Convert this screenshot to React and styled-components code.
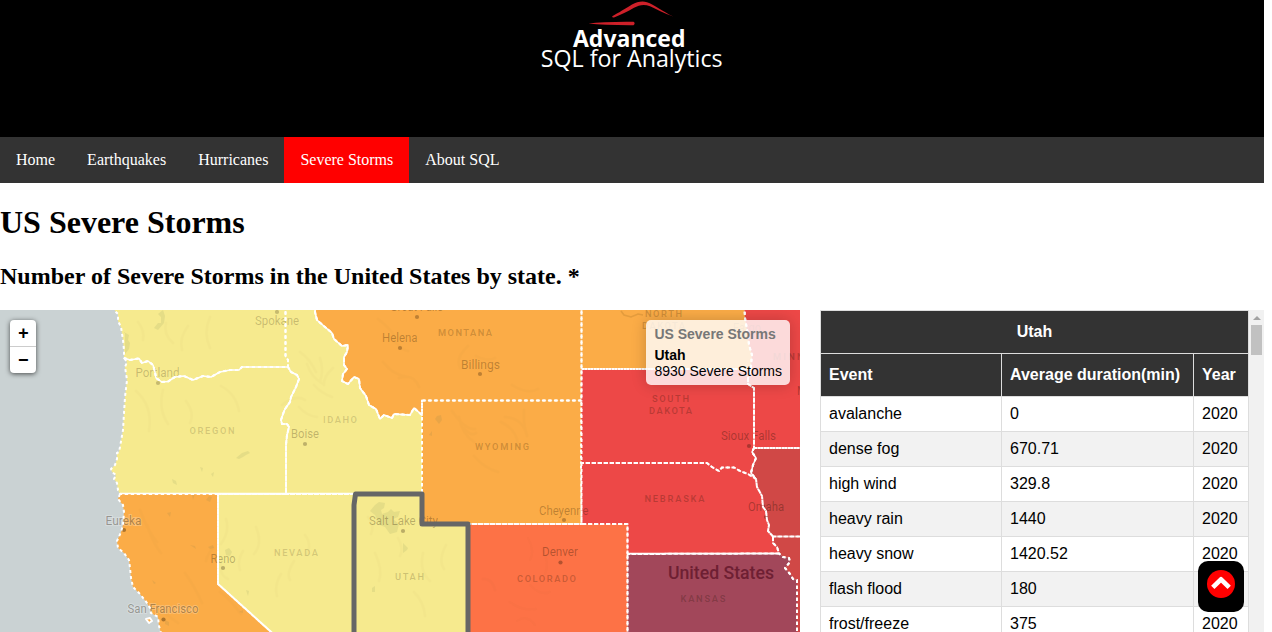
import React from "react";
import styled, { createGlobalStyle } from "styled-components";

const GlobalStyle = createGlobalStyle`
  body {
    margin: 0;
    background: #fff;
    font-family: "Liberation Serif", serif;
    overflow: hidden;
  }
`;

const Page = styled.div`
  width: 1264px;
  height: 632px;
  overflow: hidden;
`;

const Header = styled.header`
  display: flex;
  justify-content: center;
  height: 137px;
  background: #000;
`;

const Nav = styled.nav`
  display: flex;
  height: 46px;
  background: #333;
`;

const NavLink = styled.a`
  padding: 14px 16px;
  font-size: 16px;
  line-height: 18px;
  color: #fff;
  background: ${(p) => (p.$active ? "#f00" : "transparent")};
`;

const Title = styled.h1`
  margin: 21px 0 22px;
  font-size: 32px;
  line-height: 37px;
`;

const Subtitle = styled.h2`
  margin: 0 0 20px;
  font-size: 24px;
  line-height: 27px;
`;

const Content = styled.main`
  display: flex;
  gap: 20px;
  height: 322px;
`;

const MapPane = styled.div`
  position: relative;
  width: 800px;
  height: 322px;
  overflow: hidden;
  background: #cad2d3;
  font-family: "Liberation Sans", sans-serif;
  svg {
    display: block;
  }
`;

const ZoomControl = styled.div`
  position: absolute;
  left: 10px;
  top: 10px;
  width: 26px;
  border-radius: 4px;
  background: #fff;
  box-shadow: 0 1px 5px rgba(0, 0, 0, 0.65);
`;

const ZoomButton = styled.div`
  height: 26px;
  font: bold 18px/28px "Liberation Mono", monospace;
  text-align: center;
  text-indent: 1px;
  color: #000;
  & + & {
    border-top: 1px solid #ccc;
  }
`;

const Info = styled.div`
  position: absolute;
  top: 10px;
  right: 10px;
  padding: 6px 8px;
  font-size: 14px;
  line-height: 16px;
  white-space: nowrap;
  border-radius: 5px;
  background: rgba(255, 255, 255, 0.8);
  box-shadow: 0 0 15px rgba(0, 0, 0, 0.2);
`;

const InfoTitle = styled.h4`
  margin: 0 0 5px;
  color: #777;
`;

const TablePane = styled.div`
  display: flex;
  width: 444px;
  height: 322px;
  overflow: hidden;
`;

const Table = styled.table`
  width: 429px;
  height: max-content;
  table-layout: fixed;
  border-collapse: collapse;
  font: 16px/18px "Liberation Sans", sans-serif;
`;

const HeadCell = styled.th`
  padding: 12px 8px;
  border: 1px solid #ddd;
  text-align: ${(p) => p.$align || "left"};
  color: #fff;
  background: #333;
`;

const Row = styled.tr`
  &:nth-child(even) {
    background: #f2f2f2;
  }
`;

const Cell = styled.td`
  padding: 8px;
  border: 1px solid #ddd;
`;

const ScrollTrack = styled.div`
  display: flex;
  flex-direction: column;
  align-items: center;
  width: 15px;
  background: #f1f1f1;
`;

const ScrollArrow = styled.div`
  margin: 6px 0 5px;
  border: 4px solid transparent;
  border-top: 0;
  border-bottom-color: #a3a3a3;
`;

const ScrollThumb = styled.div`
  width: 11px;
  height: 30px;
  background: #c1c1c1;
`;

const TopButton = styled.button`
  position: fixed;
  left: 1198px;
  top: 561px;
  width: 46px;
  height: 51px;
  padding: 9px 9px 14px;
  border: 0;
  border-radius: 10px;
  background: #000;
  svg {
    display: block;
  }
`;

const MapText = styled.text`
  font-family: Roboto, sans-serif;
  font-size: ${(p) => p.$size}px;
  font-weight: ${(p) => p.$weight};
  fill: ${(p) => p.$fill || "#201000"};
  fill-opacity: ${(p) => p.$opacity || 1};
`;

const LogoText = styled.text`
  font-family: "Open Sans", sans-serif;
  font-size: ${(p) => p.$size}px;
  font-weight: ${(p) => p.$weight};
  fill: #fff;
`;

const YELLOW = "#f6ea8e";
const ORANGE = "#fbac47";
const CORAL = "#fd7246";
const RED = "#ed4847";
const BRICK = "#d04846";
const PLUM = "#a2475a";

// Shared borders, listed in one direction and reversed where the neighbour needs it.
const waCoast = [[114, 300], [115, 311], [118, 314], [118, 321], [121, 327], [123, 340], [124, 350], [124, 358]];
const orCoast = [[124, 358], [127, 362], [125, 367], [127, 380], [125, 397], [124, 413], [123, 430], [120, 447], [119, 452], [117, 453], [117, 459], [115, 465], [111, 469], [112, 472], [116, 475], [114, 479], [117, 483], [118, 490], [120, 494]];
const caCoast = [[120, 494], [118, 499], [123, 505], [124, 512], [123, 525], [121, 532], [117, 541], [118, 548], [124, 553], [129, 560], [130, 568], [131, 578], [133, 587], [140, 594], [147, 603], [150, 608], [151, 613], [158, 617], [159, 626], [163, 640]];
const columbia = [[124, 358], [130, 360], [139, 358.5], [142, 363], [148, 361], [153, 365], [155, 372], [156, 378], [162, 382], [168, 381.5], [175, 377], [184, 376], [193, 380], [203, 376], [211, 377], [220, 372], [230, 370], [239, 370], [242, 367], [288, 367]];
const waId = [[285.5, 300], [285.5, 356], [288, 360], [288, 367]];
const orId = [[288, 367], [291, 372], [297, 375], [299, 379], [296, 387], [291, 397], [290, 402], [285, 409], [283, 414], [281, 420], [282, 424], [287, 424], [289, 427], [287, 435], [286, 445], [286, 494]];
const idMt = [[316, 300], [315, 312], [317, 320], [325, 327], [332, 333], [334, 339], [342, 346], [348, 345], [347, 352], [344, 357], [344, 365], [347, 369], [343, 374], [342, 381], [348, 384], [354, 377], [359, 379], [360, 388], [366, 396], [369, 405], [376, 409], [380, 419], [384, 415], [392, 418], [394, 414], [410, 415], [414, 408], [422, 415]];
const redRiver = [[744, 300], [745, 318], [748, 335], [749, 345], [752, 355], [751, 365], [751, 369]];
const sdMn = [[751, 369], [748, 378], [748, 384], [754, 388], [754, 395], [754, 448]];
const sdIa = [[754, 448], [752, 452], [756, 458], [753, 465], [751, 473], [756, 479]];
const sdNe = [[581, 463], [707, 463], [712, 467], [719, 471], [722, 467.5], [734, 467.5], [740, 471], [748, 474], [756, 479]];
const missouri = [[756, 479], [757, 487], [762, 496], [763, 507], [766, 511], [767, 520], [769, 525], [768, 531], [773, 536.5]];
const neMo = [[773, 536.5], [773, 543], [777, 547], [779, 553.5]];
const ksMo = [[779, 553.5], [783, 557], [789, 558], [790, 562], [785, 568], [790, 574], [793, 579], [797, 580], [797, 640]];
const rev = (a) => [...a].reverse();

const states = [
  { id: "WA", fill: YELLOW, pts: [...waCoast, ...columbia, ...rev(waId)] },
  { id: "OR", fill: YELLOW, pts: [...columbia, ...orId, ...rev(orCoast)] },
  { id: "CA", fill: ORANGE, pts: [...caCoast, [280, 640], [218, 584], [218, 494]] },
  { id: "NV", fill: YELLOW, pts: [[218, 494], [355, 494], [354, 640], [280, 640], [218, 584]] },
  { id: "ID", fill: YELLOW, pts: [...waId, ...orId, [422, 494], ...rev(idMt)] },
  { id: "MT", fill: ORANGE, pts: [...idMt, [422, 400.5], [581.5, 400.5], [581.5, 300]] },
  { id: "WY", fill: ORANGE, pts: [[422, 400.5], [581.5, 400.5], [581.5, 524], [422, 524]] },
  { id: "ND", fill: ORANGE, pts: [[581.5, 300], ...redRiver, [581.5, 369]] },
  { id: "MN", fill: RED, pts: [...redRiver, ...sdMn, [810, 448], [810, 300]] },
  { id: "SD", fill: RED, pts: [[581.5, 369], ...sdMn, ...sdIa, ...rev(sdNe)] },
  { id: "NE", fill: RED, pts: [...sdNe, ...missouri, ...neMo, [627.5, 554], [627.5, 524], [581.5, 524]] },
  { id: "IA", fill: BRICK, pts: [...sdIa, ...missouri, [810, 536.5], [810, 448]] },
  { id: "MO", fill: BRICK, pts: [...neMo, ...ksMo, [810, 640], [810, 536.5]] },
  { id: "KS", fill: PLUM, pts: [[627.5, 554], ...ksMo, [627.5, 640]] },
  { id: "CO", fill: CORAL, pts: [[468, 524], [627.5, 524], [627.5, 640], [468, 640]] },
];

// Borders where the dashes of both neighbours interleave into a full line.
const fullBorders = [
  columbia,
  orId,
  idMt,
  sdIa,
  [[120, 493.5], [355, 493.5]],
  [[218, 494], [218, 584], [280, 640]],
  [[627.5, 553.5], [779, 553.5]],
];

const utah = "355.5,494 422,494 422,524 468,524 468,640 354,640 354,505";
const toPoints = (pts) => pts.map((p) => p.join(",")).join(" ");

// text, left x, baseline, width, ink opacity, dot x, dot y
const cities = [
  ["Spokane", 255, 325, 44, 0.22, 277, 312],
  ["Portland", 135.5, 377, 44, 0.22, 158, 383],
  ["Boise", 291, 438, 28, 0.26, 305, 444],
  ["Helena", 382, 342, 35.5, 0.28, 400, 348],
  ["Great Falls", 390, 311, 53, 0.28, 417, 317],
  ["Billings", 461, 368.5, 39, 0.28, 480, 374],
  ["Eureka", 105.5, 524.5, 36, 0.36, 124, 530],
  ["Reno", 210.5, 562.5, 25, 0.28, 223, 568],
  ["San Francisco", 127.5, 613, 71, 0.36, 163.5, 619.5],
  ["Salt Lake City", 369, 525, 69, 0.28, 403, 531],
  ["Cheyenne", 539, 514.5, 49.5, 0.28, 564, 520],
  ["Denver", 542, 556, 36, 0.32, 560.5, 562.5],
  ["Sioux Falls", 721, 440, 55, 0.32, 749, 446],
  ["Omaha", 748, 510.5, 36, 0.32, 766, 517],
  ["Fargo", 733, 332, 28, 0.2, 747, 338],
  ["Minneapolis", 797, 395, 60, 0.32, 828, 401],
];

const regions = [
  ["OREGON", 189.5, 434, 45, 0.17],
  ["IDAHO", 323, 423, 34, 0.17],
  ["NEVADA", 274, 556, 44, 0.17],
  ["UTAH", 395, 580, 29, 0.19],
  ["MONTANA", 438, 335.5, 54, 0.21],
  ["WYOMING", 475, 450, 54, 0.21],
  ["NORTH", 645, 317, 37, 0.2],
  ["DAKOTA", 642, 329, 43, 0.2],
  ["SOUTH", 652, 402, 37, 0.25],
  ["DAKOTA", 649, 413.5, 43, 0.25],
  ["MINNESOTA", 773, 360, 70, 0.25],
  ["NEBRASKA", 644.5, 502, 60, 0.25],
  ["COLORADO", 517, 582, 59, 0.24],
  ["KANSAS", 680.5, 601.5, 45, 0.24],
];

// Faint lakes and mountain shading of the base map.
const relief = [
  "M163 310l2 6-1 7-6 7-4-2 4-5 3 0 0-6-3-3z",
  "M124 332l5 3-1 5 2 3-1 6-4 5 0-22z",
  "M236 458l6-5 6-2 2 2-4 2-3 2-4 2z",
  "M441 415l-4 1-2 3 4 5 3-4z",
  "M172 479l4 2 1 4-4-2z M200 467l3 1-1 4z M211 474l3-2-1 5z",
  "M225 550l4-2 3 4-2 4-4-1z M246 590l3 1-1 5z",
  "M192 495l3-1-2 6z M206 500l3-4 3 1-2 5z M167 513l4-1-1 5z",
  "M190 545l5 1 1 3z M208 547l5-2 1 3-4 1z M152 580l4 3-2 1z M239 612l4-2 0 3z",
  "M429 435l3-4 0 5z M165 620l4 2 0 4-4-2z",
];

const shading = [
  "M300 352q10 7 16 20m-9-8q4 13 16 20m-3-26q4 12 0 24m13-14q-10 9-9 17m-10 0q7 8 18 12m-50 8q14-11 23-5m-6 7q8 9 18 10",
  "M226 519q4 12-5 25m22 7q-6 10-3 19m16-43q7 17-2 27m27 20q-7 11-4 22m17-35q-8 13-4 19m15-45q7 9 2 20m-86 9q-2 11 7 15",
  "M391 337q12 14 17 14m-25 11q10 13 24 15m-29-58q18 14 16 20m74 7q-13 12-8 22m16-12q12 6 19 2m-96 20q15-5 20 9m93-2q16 10 26 4",
  "M452 411q13 19 23 18m-16-12q3 17 15 25m31-25q17 1 22 18m-26-13q15 7 17 22m6-34q-1 14 3 26m-53 20q10 12 24 16m-34-44q7 9 12 5",
  "M138 322q7 9 5 18m23-17q-3 11 7 20m15-17q-9 12-6 24m28-33q-7 16 0 31m-74 43q17 15 13 40m14-41q-5 19 5 34m18-23q9 12 4 22m31-37q15 8 18 25",
  "M140 510q8 22 17 32m-10-17q7 20 14 28m24 20q10 14 17 30m-48-1q12 13 24 21m42-31q9 6 21 22m-28-66q-6 7-7 13",
  "M528 538q7 13 2 22m12-11q8 14 3 25m-15 11q10 11 20 7m-40 10q11 9 26 7m-19 12q10-7 18 4m-52-46q9-1 12 11",
  "M375 553q8 17 4 28m44-28q-4 18 7 28m-16 11q10 10 11 24m21-71q-8 15-2 24m-76-52q7 9 3 17m27 4q6 11 2 18",
];

function UsMap() {
  return (
    <svg width="800" height="322" viewBox="0 310 800 322">
      {states.map((s) => (
        <polygon key={s.id} points={toPoints(s.pts)} fill={s.fill} />
      ))}
      <polygon points={utah} fill={YELLOW} />
      <g fill="#56704a" opacity="0.1">
        {relief.map((d) => (
          <path key={d} d={d} />
        ))}
        <path d="M375 505l4-3 6 1-1 5-3 2 1 4 6-2 3-3 3 3 6-1-2 6-5 2 6 5-2 8-7 2-5-7-5-2-5-10-5-4z M403 543l5 5-1 2-4 3z M372 588l3-2 0 6-3 0z" />
      </g>
      <path d="M621 311l3 4 7 2 7-3 5 1" fill="none" stroke="#a06a20" strokeWidth="1.6" opacity="0.25" />
      <g fill="none" stroke="#775d37" strokeWidth="2.5" strokeLinecap="round" opacity="0.02">
        {shading.map((d) => (
          <path key={d} d={d} />
        ))}
      </g>
      {regions.map(([name, x, y, w, ink]) => (
        <MapText key={name + x} x={x} y={y} textLength={w} $size={9.3} $weight={600} $opacity={ink}>
          {name}
        </MapText>
      ))}
      {cities.map(([name, x, y, w, ink, cx, cy]) => (
        <g key={name}>
          <MapText
            x={x}
            y={y}
            textLength={w}
            lengthAdjust="spacingAndGlyphs"
            $size={12}
            $weight={400}
            $opacity={ink}
            stroke={name === "Eureka" || name === "San Francisco" ? "#fff" : "none"}
            strokeWidth="2"
            strokeOpacity="0.22"
            paintOrder="stroke"
          >
            {name}
          </MapText>
          <circle cx={cx} cy={cy} r="2.1" fill="#201000" fillOpacity={ink} />
        </g>
      ))}
      <MapText x="668" y="579" textLength="106" lengthAdjust="spacingAndGlyphs" $size={18.5} $weight={500} $fill="#6e1f33">
        United States
      </MapText>
      <g fill="none" stroke="#fff" strokeLinejoin="round">
        {states.map((s) => (
          <polygon key={s.id} points={toPoints(s.pts)} strokeWidth="2" strokeDasharray="3" />
        ))}
        {fullBorders.map((b, i) => (
          <polyline key={i} points={toPoints(b)} strokeWidth="1.5" />
        ))}
        <path d="M146 619l4-1 2 3-3 2z" strokeWidth="2" fill={ORANGE} />
      </g>
      <polygon points={utah} fill="none" stroke="#666" strokeWidth="5" strokeLinejoin="round" />
    </svg>
  );
}

function Logo() {
  return (
    <svg width="184" height="76" viewBox="540 0 184 76">
      <path
        d="M612.2 16.2C618 13.4 626 8.2 632 4.6C637 1.9 642 0.8 647 2.2C654 4.6 663 11.5 673.3 16.6C664 13.4 656 9 650 6.2C644 3.8 639 5 634 7.8C627 11.8 620 15.2 614 17.4Q612 17.6 612.2 16.2Z"
        fill="#cd2029"
      />
      <path d="M588.5 23.5Q604 21.5 633.5 21.8Q635.8 23.5 633.5 25.2Q604 25.3 588.5 23.5Z" fill="#cd2029" />
      <LogoText x="573" y="46.6" textLength="112.5" lengthAdjust="spacingAndGlyphs" $size={22.8} $weight={700}>
        Advanced
      </LogoText>
      <LogoText x="540.7" y="66.5" textLength="182" lengthAdjust="spacingAndGlyphs" $size={22.8} $weight={400}>
        SQL for Analytics
      </LogoText>
    </svg>
  );
}

const links = ["Home", "Earthquakes", "Hurricanes", "Severe Storms", "About SQL"];

const rows = [
  ["avalanche", "0"],
  ["dense fog", "670.71"],
  ["high wind", "329.8"],
  ["heavy rain", "1440"],
  ["heavy snow", "1420.52"],
  ["flash flood", "180"],
  ["frost/freeze", "375"],
];

export default function App() {
  return (
    <Page>
      <GlobalStyle />
      <Header>
        <Logo />
      </Header>
      <Nav>
        {links.map((l) => (
          <NavLink key={l} $active={l === "Severe Storms"}>
            {l}
          </NavLink>
        ))}
      </Nav>
      <Title>US Severe Storms</Title>
      <Subtitle>Number of Severe Storms in the United States by state. *</Subtitle>
      <Content>
        <MapPane>
          <UsMap />
          <ZoomControl>
            <ZoomButton>+</ZoomButton>
            <ZoomButton>−</ZoomButton>
          </ZoomControl>
          <Info>
            <InfoTitle>US Severe Storms</InfoTitle>
            <b>Utah</b>
            <br />
            8930 Severe Storms
          </Info>
        </MapPane>
        <TablePane>
          <Table>
            <colgroup>
              <col width="181" />
              <col width="192" />
              <col width="55" />
            </colgroup>
            <thead>
              <tr>
                <HeadCell colSpan={3} $align="center">Utah</HeadCell>
              </tr>
              <tr>
                <HeadCell>Event</HeadCell>
                <HeadCell>Average duration(min)</HeadCell>
                <HeadCell>Year</HeadCell>
              </tr>
            </thead>
            <tbody>
              {rows.map(([event, duration]) => (
                <Row key={event}>
                  <Cell>{event}</Cell>
                  <Cell>{duration}</Cell>
                  <Cell>2020</Cell>
                </Row>
              ))}
            </tbody>
          </Table>
          <ScrollTrack>
            <ScrollArrow />
            <ScrollThumb />
          </ScrollTrack>
        </TablePane>
      </Content>
      <TopButton aria-label="Back to top">
        <svg width="28" height="28" viewBox="0 0 28 28">
          <circle cx="14" cy="14" r="14" fill="#f00" />
          <path d="M5.8 17.4L14 9.4L22.2 17.4" fill="none" stroke="#fff" strokeWidth="4.8" strokeLinejoin="round" />
        </svg>
      </TopButton>
    </Page>
  );
}
